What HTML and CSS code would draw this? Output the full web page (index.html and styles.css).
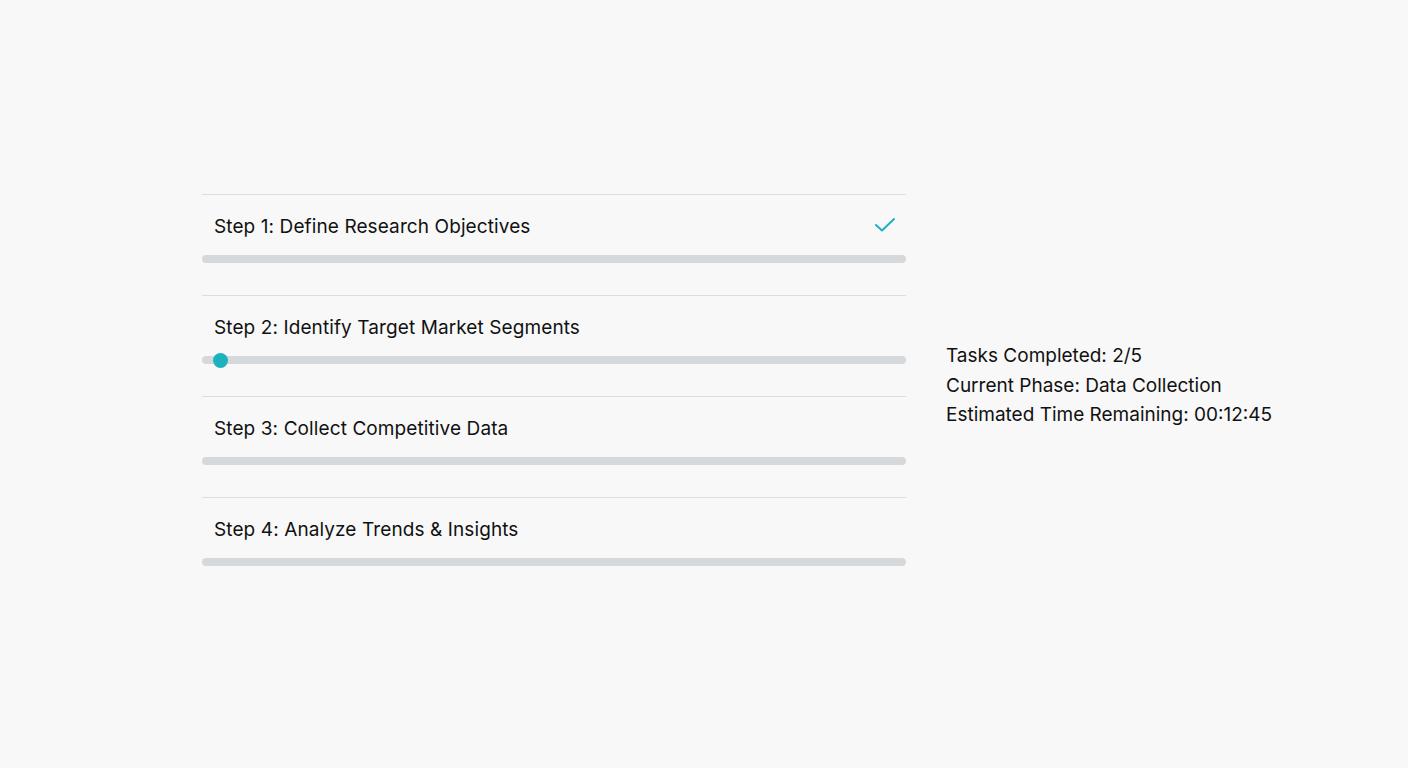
FILE: index.html
```html
<!DOCTYPE html>
<html>
<head>
    <title>Market Research Progress</title>
    <link rel="stylesheet" href="styles.css">
</head>
<body>
    <main class="layout">
        <ul class="steps">
            <li class="step done">
                <div class="step-head">
                    <span>Step 1: Define Research Objectives</span>
                    <svg class="check" width="20" height="15" viewBox="0 0 20 15">
                        <polyline points="1,8 7,13.5 19,2" fill="none" stroke="#1cb3be" stroke-width="2" stroke-linecap="round" stroke-linejoin="round"/>
                    </svg>
                </div>
                <div class="track"></div>
            </li>
            <li class="step active">
                <div class="step-head">
                    <span>Step 2: Identify Target Market Segments</span>
                </div>
                <div class="track">
                    <span class="thumb"></span>
                </div>
            </li>
            <li class="step">
                <div class="step-head">
                    <span>Step 3: Collect Competitive Data</span>
                </div>
                <div class="track"></div>
            </li>
            <li class="step">
                <div class="step-head">
                    <span>Step 4: Analyze Trends &amp; Insights</span>
                </div>
                <div class="track"></div>
            </li>
        </ul>

        <div class="summary">
            <p>Tasks Completed: 2/5</p>
            <p>Current Phase: Data Collection</p>
            <p>Estimated Time Remaining: 00:12:45</p>
        </div>
    </main>
</body>
</html>
```

FILE: styles.css
```css
body {
    margin: 0;
    font-family: Inter, "Noto Sans", sans-serif;
    background-color: #f8f8f8;
    color: #111;
}

.layout {
    display: flex;
    align-items: flex-start;
    gap: 40px;
    padding: 194px 0 0 202px;
}

.steps {
    list-style: none;
    margin: 0;
    padding: 0;
    width: 704px;
}

.step {
    border-top: 1px solid #dcdddd;
    padding: 20px 0 32px;
}

.step-head {
    display: flex;
    justify-content: space-between;
    align-items: center;
    padding: 0 11px 0 12px;
    font-size: 19px;
    letter-spacing: 0.1px;
    line-height: 24px;
}

.check {
    margin-bottom: 6px;
}

.track {
    position: relative;
    margin-top: 16px;
    height: 8px;
    border-radius: 4px;
    background-color: #d6d9db;
}

.thumb {
    position: absolute;
    left: 11px;
    top: -3.5px;
    width: 15px;
    height: 15px;
    border-radius: 50%;
    background-color: #1cb3be;
}

.summary {
    margin-top: 147px;
    font-size: 19px;
    line-height: 29.5px;
    white-space: nowrap;
}

.summary p {
    margin: 0;
}
```
